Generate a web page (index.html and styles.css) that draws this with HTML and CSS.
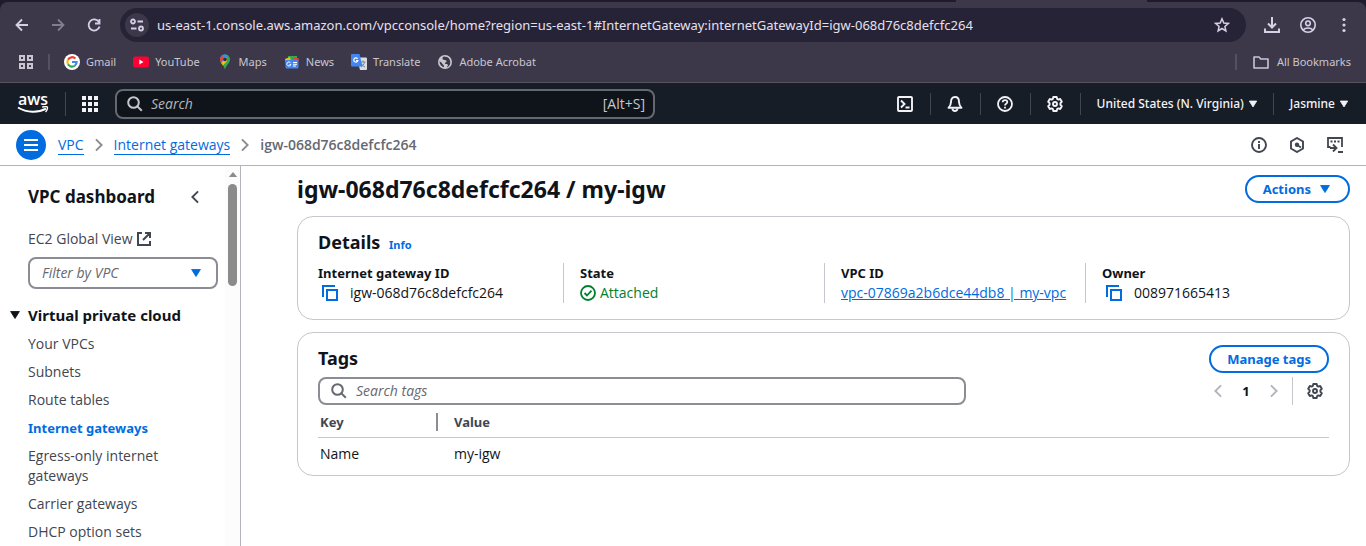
FILE: index.html
```html
<!DOCTYPE html>
<html lang="en">
<head>
<meta charset="utf-8">
<title>igw-068d76c8defcfc264 | VPC Console</title>
<link rel="stylesheet" href="styles.css">
</head>
<body>
<svg class="sprite" aria-hidden="true">
  <symbol id="gear" viewBox="0 0 16 16"><path d="M6.300 1h3.400l.4 1.900 1.200.7 1.900-.6 1.600 2.800L13.400 7.200v1.600l1.400 1.400-1.600 2.800-1.900-.6-1.200.7-.4 1.900H6.300l-.4-1.900-1.200-.7-1.900.6-1.600-2.800L2.600 8.800V7.200L1.200 5.800 2.800 3l1.900.6 1.200-.7z" fill="none" stroke="currentColor" stroke-width="1.900" stroke-linejoin="round"/><circle cx="8" cy="8" r="2" fill="none" stroke="currentColor" stroke-width="1.900"/></symbol>
  <symbol id="copy" viewBox="0 0 16 16"><path d="M1 12V1h12M5 5h10v10H5z" fill="none" stroke="currentColor" stroke-width="2"/></symbol>
  <symbol id="search" viewBox="0 0 16 16"><circle cx="6.500" cy="6.500" r="5.300" fill="none" stroke="currentColor" stroke-width="2"/><path d="M10.400 10.400l4.400 4.400" fill="none" stroke="currentColor" stroke-width="2"/></symbol>
  <symbol id="right" viewBox="0 0 16 16"><path d="M4.500 1.500L11 8l-6.500 6.500" fill="none" stroke="currentColor" stroke-width="2.200"/></symbol>
  <symbol id="left" viewBox="0 0 16 16"><path d="M11.500 1.500L5 8l6.500 6.500" fill="none" stroke="currentColor" stroke-width="2.200"/></symbol>
  <symbol id="caret" viewBox="0 0 16 16"><path d="M3 4h10l-5 8z" fill="currentColor" stroke="currentColor" stroke-linejoin="round"/></symbol>
</svg>

<header class="browser">
  <div class="tabstrip"><div class="tab"></div></div>
  <div class="toolbar">
    <button class="tool" aria-label="Back"><svg viewBox="0 0 16 16"><path d="M14 8H3M8 2.500L2.500 8 8 13.500" fill="none" stroke="currentColor" stroke-width="1.800"/></svg></button>
    <button class="tool dim" aria-label="Forward"><svg viewBox="0 0 16 16"><path d="M2 8h11M8 2.500L13.500 8 8 13.500" fill="none" stroke="currentColor" stroke-width="1.800"/></svg></button>
    <button class="tool" aria-label="Reload"><svg viewBox="0 0 16 16"><path d="M13 5A5.600 5.600 0 1 0 13.600 9.500M13.500 2v4.500H9" fill="none" stroke="currentColor" stroke-width="1.800"/></svg></button>
    <div class="omnibox">
      <button class="site" aria-label="Site information"><svg viewBox="0 0 16 16"><g fill="none" stroke="currentColor" stroke-width="1.800"><circle cx="4" cy="4.500" r="2"/><path d="M8.500 4.500H14M2 11.500h5.500"/><circle cx="12" cy="11.500" r="2"/></g></svg></button>
      <input class="url" aria-label="Address" value="us-east-1.console.aws.amazon.com/vpcconsole/home?region=us-east-1#InternetGateway:internetGatewayId=igw-068d76c8defcfc264">
      <button class="star" aria-label="Bookmark"><svg viewBox="0 0 16 16"><path d="M8 1.800l1.800 4.200 4.500.4-3.400 3 1 4.500L8 11.500l-3.900 2.400 1-4.500-3.400-3L6.200 6z" fill="none" stroke="currentColor" stroke-width="1.500"/></svg></button>
    </div>
    <button class="tool" aria-label="Downloads"><svg viewBox="0 0 16 16"><path d="M8 0v10M4 6.500l4 4 4-4M1 11.500V15h14v-3.500" fill="none" stroke="currentColor" stroke-width="2"/></svg></button>
    <button class="tool" aria-label="Profile"><svg viewBox="0 0 16 16"><g fill="none" stroke="currentColor" stroke-width="1.600"><circle cx="8" cy="8" r="7.200"/><circle cx="8" cy="6.300" r="2.300"/><path d="M3 13c2.500-2.700 7.500-2.700 10 0"/></g></svg></button>
    <button class="tool" aria-label="Menu"><svg viewBox="0 0 16 16"><g fill="currentColor"><circle cx="8" cy="2.500" r="1.600"/><circle cx="8" cy="8" r="1.600"/><circle cx="8" cy="13.500" r="1.600"/></g></svg></button>
  </div>
  <nav class="bookmarks" aria-label="Bookmarks">
    <button class="apps" aria-label="Apps"><svg viewBox="0 0 16 16"><path d="M2 2h4v4H2zM10 2h4v4h-4zM2 10h4v4H2zM10 10h4v4h-4z" fill="none" stroke="currentColor" stroke-width="2"/></svg></button>
    <span class="sep"></span>
    <a href="#gmail"><svg viewBox="0 0 16 16"><circle cx="8" cy="8" r="8" fill="#fff"/><g fill="none" stroke-width="2.200"><path d="M11.400 4.600A4.600 4.600 0 0 0 4 5.800" stroke="#ea4335"/><path d="M4 5.800a4.600 4.600 0 0 0 0 4.500" stroke="#fbbc05"/><path d="M4 10.300a4.600 4.600 0 0 0 7 1.200" stroke="#34a853"/><path d="M11 11.500A4.600 4.600 0 0 0 12.600 8H8" stroke="#4285f4"/></g></svg>Gmail</a>
    <a href="#youtube"><svg viewBox="0 0 16 16"><rect y="2.500" width="16" height="11" rx="2.500" fill="#f03"/><path d="M6.300 5.600L10.500 8l-4.200 2.400z" fill="#fff"/></svg>YouTube</a>
    <a href="#maps"><svg viewBox="0 0 16 16"><path d="M8 .5C5 .5 3 2.800 3 5.500c0 3.500 3.500 5 5 10 1.500-5 5-6.500 5-10C13 2.800 11 .5 8 .5z" fill="#34a853"/><path d="M3 5.500C3 2.800 5 .5 8 .5c1.200 0 2.200.4 3 1L4.300 9C3.500 8 3 7 3 5.500z" fill="#4285f4"/><path d="M3.300 3.800l1.500-2.200 2 2.200-2.700 4.900C3.100 7.200 2.800 5.500 3.300 3.800z" fill="#ea4335"/><path d="M4.200 8.900l5-5.500 1 3.500-4.300 4.500z" fill="#fbbc05"/><circle cx="8" cy="5.500" r="1.800" fill="#26314e"/></svg>Maps</a>
    <a href="#news"><svg viewBox="0 0 16 16"><path d="M4 2h9v5H4z" fill="#34a853"/><path d="M1 5l5-2 1 4-5 3z" fill="#fbbc05"/><path d="M10 3.500l5 1-1 4-5-1z" fill="#ea4335"/><rect x="1.500" y="6" width="13" height="8.500" rx="1" fill="#4285f4"/><path d="M6.500 8.800a2 2 0 1 0 .3 1.700H5.500M9 8.500h4M9 10.300h4M9 12h3" fill="none" stroke="#fff"/></svg>News</a>
    <a href="#translate"><svg viewBox="0 0 16 16"><path d="M6 3.500h9a1 1 0 0 1 1 1V15a1 1 0 0 1-1 1H9z" fill="#dadce0"/><path d="M9.500 8h5M12 6.500V8M13.500 8c-.5 2.500-2 4-3.500 5M10.500 10c1 1.500 2 2.300 3.500 3" fill="none" stroke="#7d8796"/><path d="M1 0h7.500l3 12.500H1a1 1 0 0 1-1-1V1a1 1 0 0 1 1-1z" fill="#4285f4"/><path d="M6.600 4.800a2.100 2.100 0 1 0 .3 1.700H5" fill="none" stroke="#fff" stroke-width="1.200"/></svg>Translate</a>
    <a href="#acrobat"><svg viewBox="0 0 16 16"><circle cx="8" cy="8" r="7" fill="#c9c7ce"/><path d="M7 2.500C5.500 3 5 4.500 6 5.500s3.500.2 3.500 1.800-2 1-1.500 2.200 3 .3 3 1.500-1 1.500-1.200 2.500c2-.8 3.500-2.700 3.500-5C13.300 6 12 4 10.500 3.300zM2.500 7.200c0 3.300 2 5.300 4.500 6 .2-1.200-.2-2-1-2.700S5 8.500 2.500 7.200z" fill="#3c384a"/></svg>Adobe Acrobat</a>
    <span class="sep push"></span>
    <a class="all" href="#all"><svg viewBox="0 0 16 16"><path d="M1 3h5l1.800 2H15v9H1z" fill="none" stroke="currentColor" stroke-width="1.600" stroke-linejoin="round"/></svg>All Bookmarks</a>
  </nav>
</header>

<header class="awsnav">
  <a class="logo" href="#home" aria-label="AWS home"><span>aws</span><svg viewBox="0 0 32 8"><path d="M1 1.500c9 5.500 20 5.500 28 1.200" fill="none" stroke="currentColor" stroke-width="1.900"/><path d="M25 1.200c3-.9 5-.6 5.300 0 .4.700-.2 2.800-1.700 4.800" fill="none" stroke="currentColor" stroke-width="1.400"/></svg></a>
  <span class="rule"></span>
  <button class="grid" aria-label="Services"><svg viewBox="0 0 16 16"><path d="M0 0h4v4H0zM6 0h4v4H6zM12 0h4v4h-4zM0 6h4v4H0zM6 6h4v4H6zM12 6h4v4h-4zM0 12h4v4H0zM6 12h4v4H6zM12 12h4v4h-4z" fill="currentColor"/></svg></button>
  <label class="navsearch"><svg><use href="#search"/></svg><input type="text" aria-label="Search" placeholder="Search"><span>[Alt+S]</span></label>
  <div class="navtools">
    <button aria-label="CloudShell"><svg viewBox="0 0 16 16"><g fill="none" stroke="currentColor" stroke-width="1.900"><rect x="1" y="1" width="14" height="14" rx="1"/><path d="M4 4.500L7.500 8 4 11.500M8.500 11.500h4"/></g></svg></button>
    <button aria-label="Notifications"><svg viewBox="0 0 16 16"><path d="M8 1C5 1 4 3.500 4 6c0 3-1 4.200-2.500 5.800h13C13 10.200 12 9 12 6c0-2.500-1-5-4-5z" fill="none" stroke="currentColor" stroke-width="1.900" stroke-linejoin="round"/><path d="M5.500 12.500a2.500 2.500 0 0 0 5 0" fill="none" stroke="currentColor" stroke-width="1.900"/></svg></button>
    <button aria-label="Support"><svg viewBox="0 0 16 16"><g fill="none" stroke="currentColor" stroke-width="1.800"><circle cx="8" cy="8" r="7"/><path d="M5.700 6.300C5.800 3.300 10.300 3.500 10.300 6c0 1.500-2.300 1.800-2.300 3.600M8 10.800v1.800"/></g></svg></button>
    <button aria-label="Settings"><svg><use href="#gear"/></svg></button>
    <button class="text">United States (N. Virginia)<svg class="tri"><use href="#caret"/></svg></button>
    <button class="text">Jasmine<svg class="tri"><use href="#caret"/></svg></button>
  </div>
</header>

<div class="crumbbar">
  <button class="burger" aria-label="Toggle navigation"><svg viewBox="0 0 16 16"><path d="M1 3h14M1 8h14M1 13h14" stroke="currentColor" stroke-width="2"/></svg></button>
  <nav class="crumbs" aria-label="Breadcrumbs">
    <a href="#vpc">VPC</a><svg><use href="#right"/></svg><a href="#igws">Internet gateways</a><svg><use href="#right"/></svg><span>igw-068d76c8defcfc264</span>
  </nav>
  <div class="panels">
    <button aria-label="Info"><svg viewBox="0 0 16 16"><g fill="none" stroke="currentColor" stroke-width="1.900"><circle cx="8" cy="8" r="7"/><path d="M8 7v5M8 4v2"/></g></svg></button>
    <button aria-label="Resources"><svg viewBox="0 0 16 16"><path d="M8 1l6 3.500v7L8 15l-6-3.500v-7z" fill="none" stroke="currentColor" stroke-width="1.900"/><circle cx="8" cy="7.800" r="2.200" fill="currentColor"/><path d="M8 8l4 2.500" stroke="currentColor" stroke-width="1.900"/></svg></button>
    <button aria-label="Shell"><svg viewBox="0 0 16 16"><path d="M3.500 10H1V1h14v9M3.500 4.500h2M7 4.500h2M10.500 4.500h2M3 11h6M6 7.500L9.500 11 6 14.500M11 15h5" fill="none" stroke="currentColor" stroke-width="1.800"/></svg></button>
  </div>
</div>

<div class="workspace">
  <aside class="sidebar">
    <div class="sidecontent">
      <div class="sidehead"><h2>VPC dashboard</h2><button aria-label="Close navigation"><svg><use href="#left"/></svg></button></div>
      <a class="global" href="#ec2">EC2 Global View <svg viewBox="0 0 16 16"><path d="M6 2H2v12h12v-4M9 2h5v5M14 2L7 9" fill="none" stroke="currentColor" stroke-width="2"/></svg></a>
      <button class="filter">Filter by VPC<svg><use href="#caret"/></svg></button>
      <h3><svg><use href="#caret"/></svg>Virtual private cloud</h3>
      <ul>
        <li><a href="#1">Your VPCs</a></li>
        <li><a href="#2">Subnets</a></li>
        <li><a href="#3">Route tables</a></li>
        <li><a class="current" href="#4">Internet gateways</a></li>
        <li><a href="#5">Egress-only internet gateways</a></li>
        <li><a href="#6">Carrier gateways</a></li>
        <li><a href="#7">DHCP option sets</a></li>
      </ul>
    </div>
    <div class="scroll" aria-hidden="true"><svg viewBox="0 0 10 6"><path d="M5 0l5 6H0z" fill="#8b8b8b"/></svg><span></span></div>
  </aside>

  <main>
    <div class="pagehead"><h1>igw-068d76c8defcfc264 / my-igw</h1><button class="pill">Actions<svg><use href="#caret"/></svg></button></div>
    <section class="card details">
      <h2>Details <a href="#info">Info</a></h2>
      <dl>
        <div><dt>Internet gateway ID</dt><dd class="copied"><button aria-label="Copy ID"><svg><use href="#copy"/></svg></button>igw-068d76c8defcfc264</dd></div>
        <div><dt>State</dt><dd class="ok"><svg viewBox="0 0 16 16"><g fill="none" stroke="currentColor" stroke-width="1.800"><circle cx="8" cy="8" r="7"/><path d="M4.500 8l2.500 2.500 4.500-4.800"/></g></svg>Attached</dd></div>
        <div><dt>VPC ID</dt><dd><a href="#v">vpc-07869a2b6dce44db8 | my-vpc</a></dd></div>
        <div><dt>Owner</dt><dd class="copied"><button aria-label="Copy owner"><svg><use href="#copy"/></svg></button>008971665413</dd></div>
      </dl>
    </section>
    <section class="card tags">
      <div class="taghead"><h2>Tags</h2><button class="pill">Manage tags</button></div>
      <div class="tagtools">
        <label class="tagsearch"><svg><use href="#search"/></svg><input type="text" aria-label="Search tags" placeholder="Search tags"></label>
        <div class="pager">
          <button class="off" aria-label="Previous page"><svg><use href="#left"/></svg></button>
          <button class="page">1</button>
          <button class="off" aria-label="Next page"><svg><use href="#right"/></svg></button>
          <button class="prefs" aria-label="Preferences"><svg><use href="#gear"/></svg></button>
        </div>
      </div>
      <table>
        <thead><tr><th class="key"><span>Key</span></th><th>Value</th></tr></thead>
        <tbody><tr><td>Name</td><td>my-igw</td></tr></tbody>
      </table>
    </section>
  </main>
</div>
</body>
</html>
```
FILE: styles.css
```css
* { box-sizing: border-box; }
body {
  margin: 0;
  height: 100vh;
  display: flex;
  flex-direction: column;
  overflow: hidden;
  background: #fff;
  color: #0f141a;
  font: 14px/20px "Open Sans", "Noto Sans", sans-serif;
}
.sprite { display: none; }
svg { display: block; width: 16px; height: 16px; flex: none; }
button, input { font: inherit; color: inherit; background: none; border: 0; padding: 0; margin: 0; }
button { display: flex; align-items: center; justify-content: center; flex: none; }
input { outline: 0; min-width: 0; }
h1, h2, h3, ul, dl, dd { margin: 0; padding: 0; }
h1, h2, h3, dt, th, .pill, .current, .page { font-family: "Noto Sans", sans-serif; font-weight: 700; }
a { color: #006ce0; text-decoration: none; }

/* Browser chrome */
.browser { flex: none; background: #1f1b2c; color: #d6d0e6; border-bottom: 1px solid #57535f; }
.tabstrip { height: 2px; }
.tab { width: 14%; height: 2px; margin-left: 70%; background: #3c384a; }
.toolbar {
  display: flex;
  align-items: center;
  height: 46px;
  padding: 0 4px;
  background: #3c384a;
  border-radius: 8px 8px 0 0;
}
.tool { width: 36px; height: 36px; }
.tool.dim { color: #827d90; }
.omnibox {
  flex: 1;
  display: flex;
  align-items: center;
  height: 34px;
  margin: 0 8px;
  padding: 0 16px 0 5px;
  border-radius: 17px;
  background: #272336;
}
.site { width: 24px; height: 24px; border-radius: 12px; background: #3c384a; }
.url { flex: 1; margin-left: 8px; font-family: "Noto Sans", sans-serif; font-size: 13px; color: #e5e0f0; }
.bookmarks {
  display: flex;
  align-items: center;
  height: 34px;
  padding: 0 15px 6px 18px;
  background: #3c384a;
  color: #c9c6d0;
  font-family: "Noto Sans", sans-serif;
  font-size: 11px;
}
.bookmarks a { display: flex; align-items: center; gap: 6px; margin-right: 17px; color: inherit; }
.bookmarks .all { gap: 8px; margin-right: 0; }
.sep { width: 2px; height: 16px; margin: 0 14px; background: #56515f; }
.push { margin-left: auto; margin-right: 16px; }

/* Console navigation */
.awsnav {
  flex: none;
  display: flex;
  align-items: center;
  height: 41px;
  padding-left: 17px;
  background: #161d27;
  color: #f3f3f7;
}
.logo { width: 32px; color: #fff; font-weight: 600; font-size: 16px; text-align: center; }
.logo span { display: block; height: 13px; line-height: 12px; }
.logo svg { width: 32px; height: 8px; }
.rule { width: 1px; height: 24px; margin: 0 16px; background: #424650; }
.navsearch {
  display: flex;
  align-items: center;
  gap: 8px;
  width: 540px;
  height: 30px;
  margin-left: 17px;
  padding: 0 8px 0 10px;
  border: 2px solid #656871;
  border-radius: 8px;
  background: #0f141a;
  color: #c6c6cd;
}
.navsearch input, .tagsearch input { flex: 1; }
.navsearch input::placeholder { color: #b4b4bb; font-style: italic; opacity: 1; }
.navtools { display: flex; align-items: center; margin-left: auto; padding-right: 2px; }
.navtools button { width: 50px; height: 22px; border-left: 1px solid #424650; }
.navtools button:first-child { border-left: 0; }
.navtools .text { width: auto; gap: 3px; padding: 0 14px 0 16px; font-family: "Noto Sans", sans-serif; font-size: 12px; font-weight: 500; }
.navtools .tri { width: 12px; height: 12px; }

/* Breadcrumbs */
.crumbbar {
  flex: none;
  display: flex;
  align-items: center;
  height: 42px;
  padding: 0 15px 0 16px;
  border-bottom: 1px solid #b4b4bb;
}
.burger { width: 30px; height: 30px; border-radius: 15px; background: #006ce0; color: #fff; }
.crumbs { display: flex; align-items: center; gap: 7px; margin-left: 12px; }
.crumbs a { line-height: 19px; border-bottom: 1px solid #006ce0; }
.crumbs svg { color: #8c8c94; width: 16px; height: 14px; }
.crumbs span { font-weight: 600; color: #656871; }
.panels { display: flex; margin-left: auto; gap: 22px; padding-right: 8px; color: #424650; }

/* Sidebar */
.workspace { flex: 1; display: flex; min-height: 0; }
.sidebar { flex: none; display: flex; width: 241px; border-right: 1px solid #b4b4bb; overflow: hidden; }
.sidecontent { flex: 1; padding: 20px 7px 0 28px; color: #424650; }
.sidecontent h2 { font-size: 17px; line-height: 22px; color: #0f141a; }
.sidehead { display: flex; justify-content: space-between; padding-right: 15px; }
.sidehead svg { width: 16px; height: 14px; }
.global { display: flex; align-items: center; gap: 4px; margin-top: 21px; color: inherit; }
.filter {
  justify-content: space-between;
  width: 190px;
  height: 32px;
  margin-top: 8px;
  padding: 0 12px;
  border: 2px solid #8c8c94;
  border-radius: 8px;
  color: #656871;
  font-style: italic;
}
.filter svg { color: #006ce0; width: 16px; height: 14px; }
.sidecontent h3 { display: flex; align-items: center; gap: 6px; margin: 16px 0 9px -20px; font-size: 15px; line-height: 20px; color: #0f141a; }
.sidecontent h3 svg { width: 14px; height: 14px; }
ul { list-style: none; display: grid; gap: 8px; padding-right: 40px; }
ul a { display: block; color: inherit; }
ul .current { color: #006ce0; font-size: 13px; }
.scroll { display: flex; flex-direction: column; align-items: center; gap: 7px; width: 15px; padding-top: 6px; background: #fcfcfc; }
.scroll svg { width: 10px; height: 5px; }
.scroll span { width: 9px; height: 102px; border-radius: 5px; background: #8b8b8b; }

/* Main content */
main { flex: 1; min-width: 0; padding: 9px 16px 0 56px; }
.pagehead, .taghead, .tagtools { display: flex; align-items: center; justify-content: space-between; }
h1 { font-size: 23px; line-height: 28px; }
.pill { height: 28px; padding: 0 16px; gap: 7px; border: 2px solid #006ce0; border-radius: 14px; color: #006ce0; font-size: 13px; }
.pill svg { width: 14px; height: 14px; }
.card { margin-top: 13px; border: 1px solid #c6c6cd; border-radius: 16px; padding: 0 20px; }
.card h2 { font-size: 18px; line-height: 24px; }
.card h2 a { margin-left: 4px; font-size: 11px; }
.details { padding-top: 13px; padding-bottom: 16px; }
.details dl { display: grid; grid-template-columns: repeat(4, 1fr); column-gap: 33px; margin-top: 9px; }
.details dl > div + div { margin-left: -16px; padding-left: 16px; border-left: 1px solid #c6c6cd; }
.details h2 { height: 24px; }
dt { font-size: 13px; }
dd { display: flex; align-items: center; }
dd a { text-decoration: underline; }
.copied { gap: 12px; padding-left: 4px; }
.copied svg { color: #006ce0; }
.ok { gap: 4px; color: #00802f; }
.tags { margin-top: 12px; padding-top: 12px; }
.taghead { height: 28px; }
.taghead h2 { height: 26px; }
.tagtools { margin-top: 4px; }
.tagsearch {
  display: flex;
  align-items: center;
  gap: 9px;
  width: 648px;
  height: 28px;
  padding: 0 11px;
  border: 2px solid #8c8c94;
  border-radius: 8px;
  color: #656871;
}
.tagsearch input::placeholder { color: #656871; font-style: italic; opacity: 1; }
.pager { display: flex; align-items: center; }
.pager button { width: 28px; height: 28px; }
.pager .off { color: #b4b4bb; }
.pager .off svg { width: 16px; height: 14px; }
.pager .page { font-size: 13px; }
.pager .prefs { width: 37px; margin-left: 4px; padding-left: 8px; border-left: 1px solid #c6c6cd; color: #424650; }
table { width: 100%; border-collapse: collapse; }
th { height: 32px; padding: 3px 0 0 16px; text-align: left; font-size: 13px; color: #424650; border-bottom: 1px solid #c6c6cd; }
td { height: 38px; padding: 0 0 4px 16px; }
th.key { width: 120px; }
th.key, td:first-child { padding-left: 2px; }
.key span { display: block; border-right: 2px solid #8c8c94; line-height: 18px; }
```
